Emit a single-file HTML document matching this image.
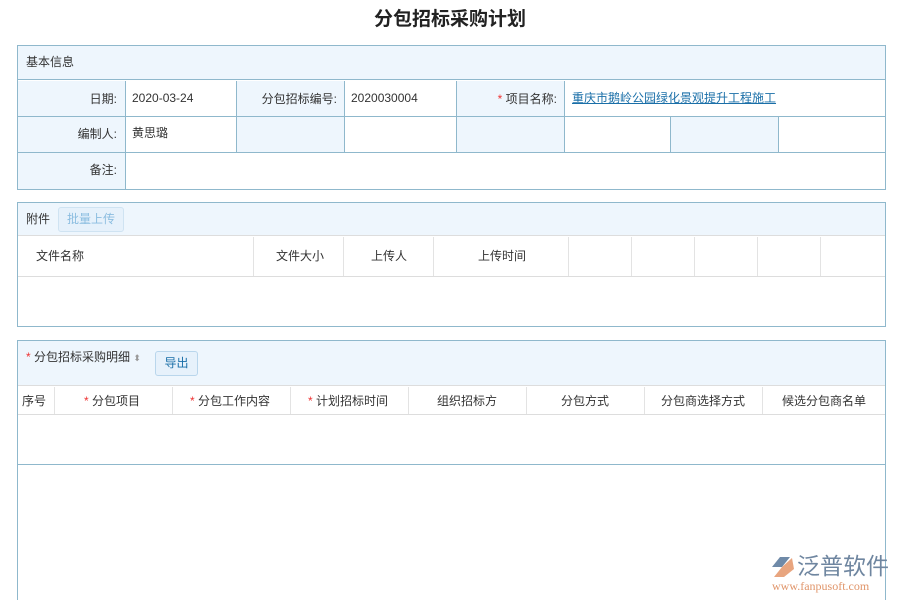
<html><head><style>
html,body{margin:0;width:900px;height:600px;overflow:hidden}
body{background:#fff;font-family:"Liberation Sans","Noto Sans CJK SC",sans-serif;font-size:12px;color:#333;position:relative}
.a{position:absolute;box-sizing:border-box}
.t{position:absolute;white-space:nowrap;line-height:16px}
.r{color:#e33}
</style></head><body>
<div class="t" style="left:0;width:900px;text-align:center;top:8px;font-size:19px;font-weight:bold;line-height:24px;color:#222">分包招标采购计划</div>

<div class="a" style="left:17px;top:45px;width:869px;height:145px;border:1px solid #8fb8cc;background:#fff"></div>
<div class="a" style="left:18px;top:46px;width:867px;height:34px;background:#eef6fd;border-bottom:1px solid #8fb8cc"></div>
<div class="t" style="left:26px;top:54px">基本信息</div>
<div class="a" style="left:18px;top:81px;width:107px;height:108px;background:#eef6fd"></div>
<div class="a" style="left:236px;top:81px;width:108px;height:71px;background:#eef6fd"></div>
<div class="a" style="left:456px;top:81px;width:108px;height:71px;background:#eef6fd"></div>
<div class="a" style="left:670px;top:117px;width:108px;height:35px;background:#eef6fd"></div>
<div class="a" style="left:18px;top:116px;width:867px;height:1px;background:#8fb8cc"></div>
<div class="a" style="left:18px;top:152px;width:867px;height:1px;background:#8fb8cc"></div>
<div class="a" style="left:125px;top:81px;width:1px;height:108px;background:#8fb8cc"></div>
<div class="a" style="left:236px;top:81px;width:1px;height:71px;background:#8fb8cc"></div>
<div class="a" style="left:344px;top:81px;width:1px;height:71px;background:#8fb8cc"></div>
<div class="a" style="left:456px;top:81px;width:1px;height:71px;background:#8fb8cc"></div>
<div class="a" style="left:564px;top:81px;width:1px;height:71px;background:#8fb8cc"></div>
<div class="a" style="left:670px;top:117px;width:1px;height:35px;background:#8fb8cc"></div>
<div class="a" style="left:778px;top:117px;width:1px;height:35px;background:#8fb8cc"></div>
<div class="t" style="right:783px;top:91px">日期:</div>
<div class="t" style="left:132px;top:90px">2020-03-24</div>
<div class="t" style="right:563px;top:91px">分包招标编号:</div>
<div class="t" style="left:351px;top:90px">2020030004</div>
<div class="t" style="right:343px;top:91px"><span class="r">*</span> 项目名称:</div>
<div class="t" style="left:572px;top:90px;color:#1a6fa8;text-decoration:underline">重庆市鹅岭公园绿化景观提升工程施工</div>
<div class="t" style="right:783px;top:126px">编制人:</div>
<div class="t" style="left:132px;top:125px">黄思璐</div>
<div class="t" style="right:783px;top:162px">备注:</div>

<div class="a" style="left:17px;top:202px;width:869px;height:125px;border:1px solid #8fb8cc"></div>
<div class="a" style="left:18px;top:203px;width:867px;height:33px;background:#eef6fd;border-bottom:1px solid #ddd"></div>
<div class="t" style="left:26px;top:211px">附件</div>
<div class="a" style="left:58px;top:207px;width:66px;height:25px;border:1px solid #cfe3f2;border-radius:3px;background:#e6f1fb;color:#8bbde0;text-align:center;line-height:23px">批量上传</div>
<div class="a" style="left:18px;top:276px;width:867px;height:1px;background:#ddd"></div>
<div class="a" style="left:253px;top:237px;width:1px;height:39px;background:#e3e3e3"></div>
<div class="a" style="left:343px;top:237px;width:1px;height:39px;background:#e3e3e3"></div>
<div class="a" style="left:433px;top:237px;width:1px;height:39px;background:#e3e3e3"></div>
<div class="a" style="left:568px;top:237px;width:1px;height:39px;background:#e3e3e3"></div>
<div class="a" style="left:631px;top:237px;width:1px;height:39px;background:#e3e3e3"></div>
<div class="a" style="left:694px;top:237px;width:1px;height:39px;background:#e3e3e3"></div>
<div class="a" style="left:757px;top:237px;width:1px;height:39px;background:#e3e3e3"></div>
<div class="a" style="left:820px;top:237px;width:1px;height:39px;background:#e3e3e3"></div>
<div class="t" style="left:36px;top:248px">文件名称</div>
<div class="t" style="left:276px;top:248px">文件大小</div>
<div class="t" style="left:371px;top:248px">上传人</div>
<div class="t" style="left:478px;top:248px">上传时间</div>

<div class="a" style="left:17px;top:340px;width:869px;height:270px;border:1px solid #8fb8cc"></div>
<div class="a" style="left:18px;top:341px;width:867px;height:45px;background:#eef6fd;border-bottom:1px solid #ddd"></div>
<div class="t" style="left:26px;top:349px"><span class="r">*</span> 分包招标采购明细 <span style="color:#999;font-size:9px">⬍</span></div>
<div class="a" style="left:155px;top:351px;width:43px;height:25px;border:1px solid #b9d6ec;border-radius:3px;background:#e6f1fb;color:#1a6fa8;text-align:center;line-height:23px">导出</div>
<div class="a" style="left:18px;top:414px;width:867px;height:1px;background:#ddd"></div>
<div class="a" style="left:18px;top:464px;width:867px;height:1px;background:#8fb8cc"></div>
<div class="a" style="left:54px;top:387px;width:1px;height:27px;background:#e3e3e3"></div>
<div class="a" style="left:172px;top:387px;width:1px;height:27px;background:#e3e3e3"></div>
<div class="a" style="left:290px;top:387px;width:1px;height:27px;background:#e3e3e3"></div>
<div class="a" style="left:408px;top:387px;width:1px;height:27px;background:#e3e3e3"></div>
<div class="a" style="left:526px;top:387px;width:1px;height:27px;background:#e3e3e3"></div>
<div class="a" style="left:644px;top:387px;width:1px;height:27px;background:#e3e3e3"></div>
<div class="a" style="left:762px;top:387px;width:1px;height:27px;background:#e3e3e3"></div>
<div class="t" style="left:22px;top:393px">序号</div>
<div class="t" style="left:84px;top:393px"><span class="r">*</span> 分包项目</div>
<div class="t" style="left:190px;top:393px"><span class="r">*</span> 分包工作内容</div>
<div class="t" style="left:308px;top:393px"><span class="r">*</span> 计划招标时间</div>
<div class="t" style="left:437px;top:393px">组织招标方</div>
<div class="t" style="left:561px;top:393px">分包方式</div>
<div class="t" style="left:661px;top:393px">分包商选择方式</div>
<div class="t" style="left:782px;top:393px">候选分包商名单</div>

<svg class="a" style="left:770px;top:555px" width="26" height="24" viewBox="0 0 26 24"><path d="M2 12 L10 2 L20 2 L12 12 Z" fill="#6f8aa8"/><path d="M12 12 L22 3 L24 14 L14 22 L4 22 Z" fill="#e8a57f"/></svg>
<div class="t" style="left:797px;top:553px;font-size:23px;line-height:27px;color:#6f86a0">泛普软件</div>
<div class="t" style="left:772px;top:580px;font-size:12px;line-height:13px;color:#e0956a;font-family:'Liberation Serif',serif">www.fanpusoft.com</div>
</body></html>
